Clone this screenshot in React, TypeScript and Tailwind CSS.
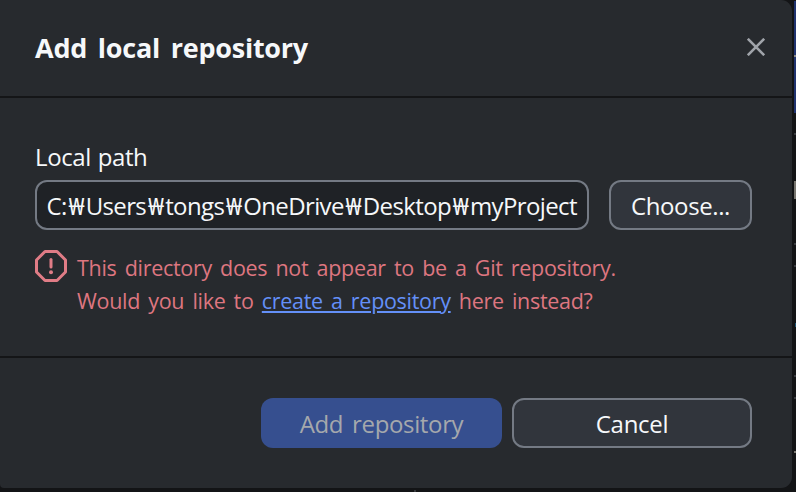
import React from "react";

const pathParts = ["C:", "Users", "tongs", "OneDrive", "Desktop", "myProject"];

function CloseIcon() {
  return (
    <svg width="18" height="18" viewBox="0 0 18 18" fill="none" stroke="#a0a4aa" strokeWidth="2.6">
      <path d="M.8.8 17.2 17.2M17.2.8.8 17.2" />
    </svg>
  );
}

function StopIcon() {
  return (
    <svg className="shrink-0" width="32" height="32" viewBox="0 0 32 32" fill="none" stroke="#e07c86">
      <path d="M10 1.5h12L30.5 10v12L22 30.5H10L1.5 22V10z" strokeWidth="3" strokeLinejoin="round" />
      <path d="M16 9.5v7.5" strokeWidth="3" strokeLinecap="round" />
      <circle cx="16" cy="22.3" r="2" fill="#e07c86" stroke="none" />
    </svg>
  );
}

/* Sliver of the window that stays visible beside the dialog. */
function WindowEdge() {
  return (
    <div className="flex w-[4px] flex-col items-end pt-px">
      <div className="flex h-[112px] w-[2px] flex-col bg-[#20336f] pt-[54px]">
        <div className="h-[2px] bg-[#86868a]" />
      </div>
      <div className="mt-[20px] h-[2px] w-[2px] bg-[#3a3c40]" />
      <div className="mt-[46px] h-[18px] w-[2px] bg-[#77756f]" />
      <div className="mt-[44px] h-[2px] w-[2px] bg-[#3a3c40]" />
      <div className="mt-[20px] h-[2px] w-[2px] bg-[#3a3c40]" />
      <div className="mt-[56px] h-[4px] w-px bg-[#1c5270]" />
      <div className="mt-[48px] h-[2px] w-[2px] bg-[#3a3c40]" />
      <div className="mt-[20px] h-[2px] w-[2px] bg-[#3a3c40]" />
      <div className="mt-[52px] h-[2px] w-[2px] bg-[#77756f]" />
    </div>
  );
}

export default function App() {
  return (
    <div className="h-[492px] w-[796px] overflow-hidden bg-[#131416] font-['Open_Sans','Noto_Sans',sans-serif] text-[24px] text-[#f6f8fa]">
      <div className="flex h-[488px]">
        <section className="flex w-[792px] shrink-0 flex-col overflow-hidden rounded-r-[11px] rounded-bl-[4px] bg-[#272a2e]">
          <header className="flex h-[98px] shrink-0 items-center justify-between border-b-2 border-[#141517] pr-[27px] pl-[35px]">
            <h1 className="text-[27px] leading-[36px] font-bold tracking-[-0.25px] whitespace-nowrap [word-spacing:4px]">Add local repository</h1>
            <button className="pb-[2px]" aria-label="Close"><CloseIcon /></button>
          </header>
          <main className="h-[260px] shrink-0 border-b-2 border-[#141517] pt-[42px] pr-10 pl-[35px]">
            <label className="block h-[40px] leading-[34px] tracking-[-0.4px] [word-spacing:1px]">Local path</label>
            <div className="flex gap-5">
              <div className="flex h-[50px] w-[554px] items-center rounded-[12px] border-2 border-[#747a84] bg-[#1f2226] px-[9.5px] pt-[2px]">
                <div className="flex w-full tracking-[-0.63px] whitespace-nowrap">
                  {pathParts.map((part, i) => (
                    <React.Fragment key={part}>
                      {i > 0 && <span className="flex w-[19px] shrink-0 justify-center">₩</span>}
                      <span>{part}</span>
                    </React.Fragment>
                  ))}
                </div>
              </div>
              <button className="flex h-[50px] w-[143px] items-center justify-center rounded-[12px] border-2 border-[#747a84] bg-[#31353c] pt-[2px] tracking-[-0.4px]">Choose...</button>
            </div>
            <div className="mt-[20px] flex gap-[10px] text-[21.5px] leading-[33px] tracking-[-0.3px] text-[#de7680] [word-spacing:2.9px]">
              <StopIcon />
              <p className="pt-px whitespace-nowrap">
                This directory does not appear to be a Git repository.<br />
                Would you like to <a className="text-[#6490f8] underline decoration-2 underline-offset-[2px]">create a repository</a> here instead?
              </p>
            </div>
          </main>
          <footer className="flex justify-end gap-[10px] pt-[40px] pr-10">
            <button className="h-[50px] w-[241px] rounded-[12px] bg-[#364f8f] pt-[2px] tracking-[-0.35px] text-[#a5a8ac] [word-spacing:3px]">Add repository</button>
            <button className="h-[50px] w-[240px] rounded-[12px] border-2 border-[#747a84] bg-[#31353c] pt-[2px] tracking-[-0.3px]">Cancel</button>
          </footer>
        </section>
        <WindowEdge />
      </div>
      <div className="flex h-[4px] items-end pl-[414px]">
        <div className="h-[2px] w-[2px] bg-[#36383c]" />
      </div>
    </div>
  );
}
